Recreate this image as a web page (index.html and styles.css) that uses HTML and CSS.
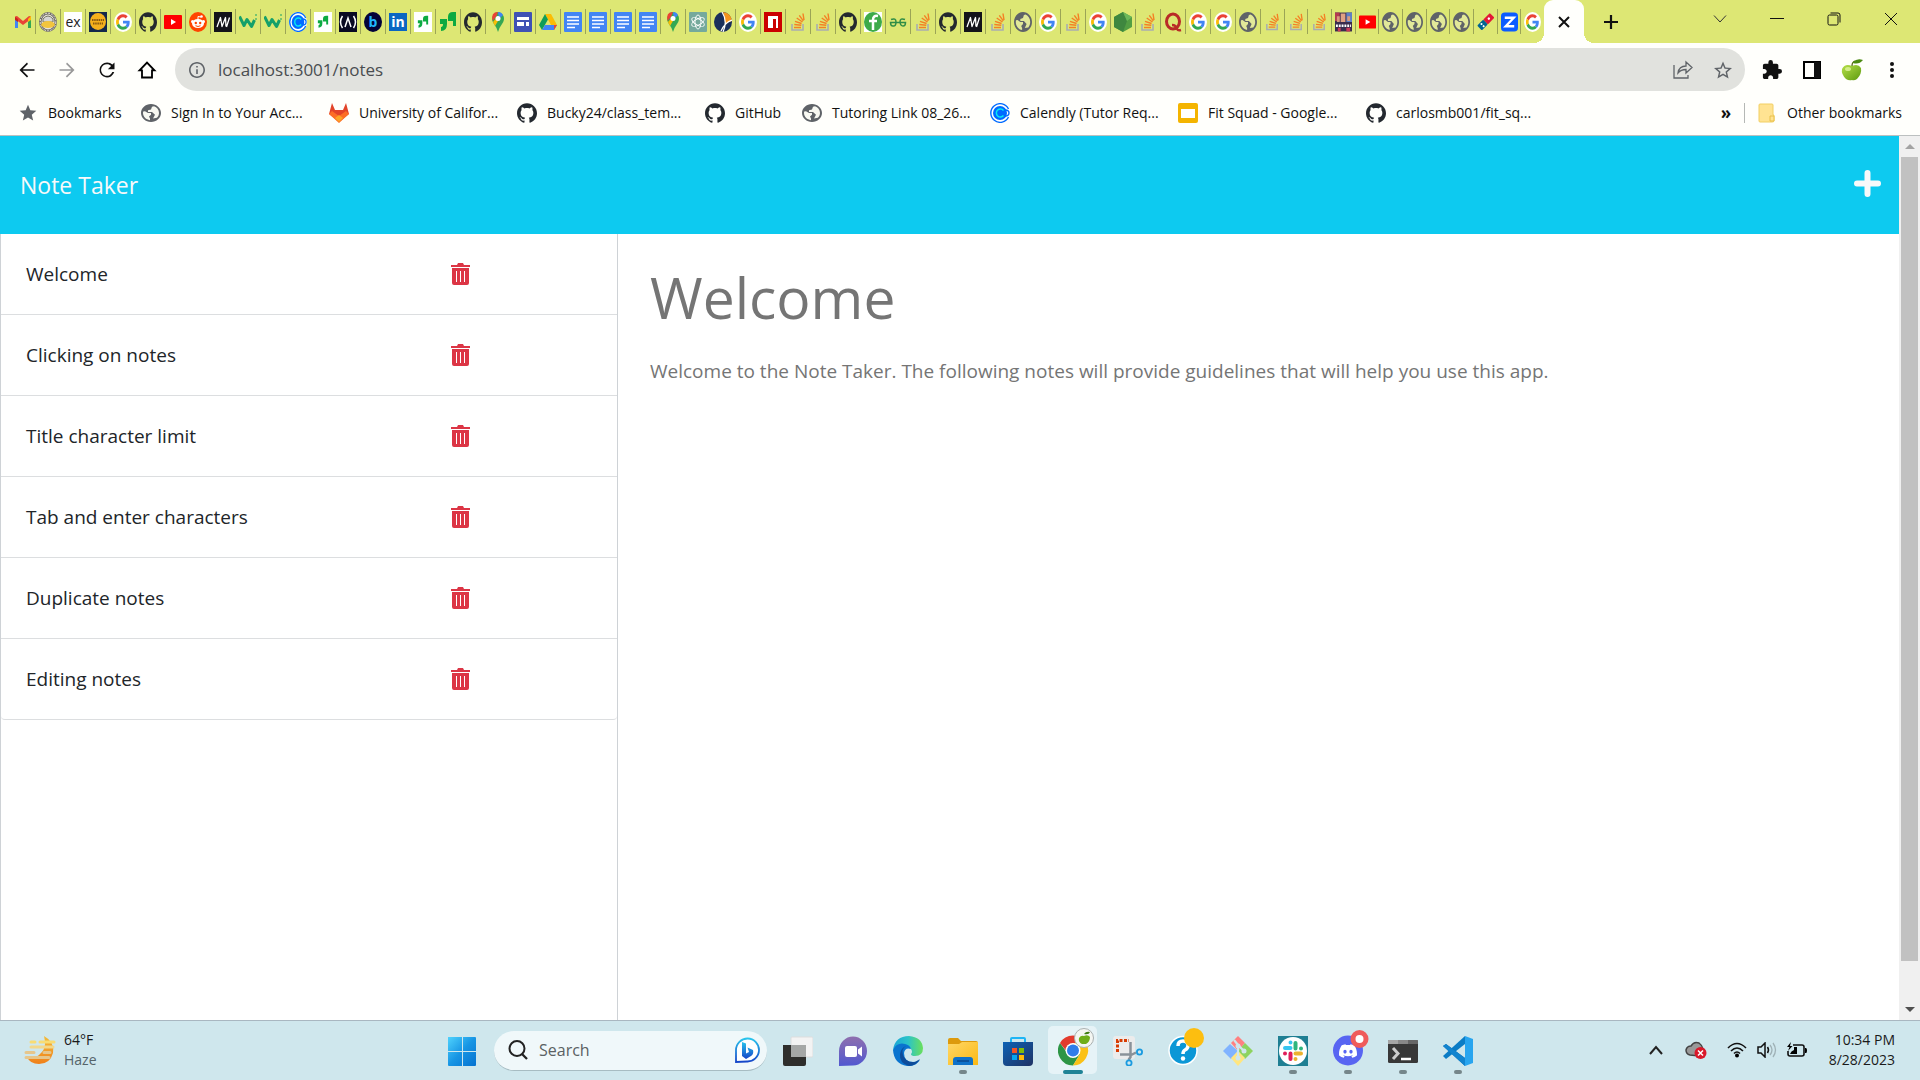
FILE: index.html
```html
<!DOCTYPE html>
<html lang="en">
<head>
<meta charset="utf-8">
<title>Note Taker</title>
<link rel="stylesheet" href="styles.css">
</head>
<body>
<svg class="sprite" aria-hidden="true">
  <symbol id="gmail" viewBox="0 0 18 20"><path d="M1 5h3v11H1z" fill="#4285f4"/><path d="M14 7l3-2v11h-3z" fill="#34a853"/><path d="M1 4.500l2-.5 6 5 6-5 2 .5V7l-8 6-8-6z" fill="#ea4335"/><path d="M1 5l3 2v3L1 8z" fill="#c5221f"/><path d="M14 7l3-3v4l-3 2z" fill="#fbbc04"/></symbol>
  <symbol id="face" viewBox="0 0 18 20"><ellipse cx="9" cy="10" rx="9" ry="10" fill="#6d6a66"/><ellipse cx="9" cy="10" rx="7.800" ry="8.800" fill="none" stroke="#e8e4da" stroke-dasharray="2 1"/><ellipse cx="9" cy="10" rx="6.500" ry="7.500" fill="#e8e4da"/><path d="M4 7q5-6 10 0v3H4z" fill="#d6d6d6" stroke="#776"/><path d="M2 13q1-4 7-4t7 4q-2 3-7 3t-7-3z" fill="#f2c53d"/></symbol>
  <symbol id="orange" viewBox="0 0 18 20"><path d="M0 0h18v20H0z" fill="#14284b"/><ellipse cx="9" cy="9.500" rx="8" ry="8.500" fill="#f5b01c"/><path d="M3 8h12M4 11.500h10" stroke="#8a5a10" stroke-width="2" stroke-dasharray="1.500 .7"/></symbol>
  <symbol id="google" viewBox="-7 -7 62 62" preserveAspectRatio="none"><circle cx="24" cy="24" r="31" fill="#fff"/><path fill="#EA4335" d="M24 9.500c3.540 0 6.710 1.220 9.210 3.600l6.850-6.850C35.900 2.380 30.470 0 24 0 14.620 0 6.510 5.380 2.560 13.220l7.980 6.190C12.430 13.720 17.740 9.500 24 9.500z"/><path fill="#4285F4" d="M46.980 24.550c0-1.570-.15-3.090-.38-4.550H24v9.020h12.940c-.58 2.960-2.260 5.480-4.780 7.180l7.730 6c4.510-4.180 7.090-10.360 7.090-17.650z"/><path fill="#FBBC05" d="M10.530 28.590c-.48-1.450-.76-2.990-.76-4.590s.27-3.140.76-4.590l-7.980-6.190C.92 16.460 0 20.120 0 24c0 3.880.92 7.540 2.560 10.780l7.970-6.190z"/><path fill="#34A853" d="M24 48c6.480 0 11.930-2.130 15.890-5.810l-7.730-6c-2.150 1.450-4.920 2.300-8.160 2.300-6.260 0-11.570-4.220-13.470-9.910l-7.980 6.190C6.510 42.620 14.620 48 24 48z"/></symbol>
  <symbol id="github" viewBox="0 0 24 24" preserveAspectRatio="none"><path fill="#24292f" d="M12 .297c-6.630 0-12 5.373-12 12 0 5.303 3.438 9.800 8.205 11.385.6.113.82-.258.82-.577 0-.285-.01-1.040-.015-2.040-3.338.724-4.042-1.610-4.042-1.610C4.422 18.070 3.633 17.700 3.633 17.700c-1.087-.744.084-.729.084-.729 1.205.084 1.838 1.236 1.838 1.236 1.070 1.835 2.809 1.305 3.495.998.108-.776.417-1.305.76-1.605-2.665-.3-5.466-1.332-5.466-5.930 0-1.310.465-2.380 1.235-3.220-.135-.303-.54-1.523.105-3.176 0 0 1.005-.322 3.300 1.230.96-.267 1.980-.399 3-.405 1.020.006 2.040.138 3 .405 2.280-1.552 3.285-1.230 3.285-1.230.645 1.653.24 2.873.12 3.176.765.84 1.230 1.910 1.230 3.220 0 4.610-2.805 5.625-5.475 5.920.42.36.81 1.096.81 2.220 0 1.606-.015 2.896-.015 3.286 0 .315.21.69.825.57C20.565 22.092 24 17.592 24 12.297c0-6.627-5.373-12-12-12"/></symbol>
  <symbol id="youtube" viewBox="0 0 18 20"><rect y="3" width="18" height="14" rx="1" fill="#f00"/><path d="M7 7l5 3-5 3z" fill="#fff"/></symbol>
  <symbol id="reddit" viewBox="0 0 18 20"><ellipse cx="9" cy="10" rx="9" ry="10" fill="#ff4500"/><ellipse cx="9" cy="11.500" rx="6" ry="4.500" fill="#fff"/><circle cx="3.500" cy="9.500" r="1.500" fill="#fff"/><circle cx="14.500" cy="9.500" r="1.500" fill="#fff"/><circle cx="12.500" cy="4.500" r="1.300" fill="#fff"/><path d="M9 8V4.500l3 .5" stroke="#fff" fill="none"/><circle cx="6.800" cy="11" r="1.200" fill="#ff4500"/><circle cx="11.200" cy="11" r="1.200" fill="#ff4500"/><path d="M6.500 13.700q2.500 1.600 5 0" stroke="#ff4500" fill="none"/></symbol>
  <symbol id="mlogo" viewBox="0 0 18 20"><path d="M0 0h18v20H0z" fill="#13131a"/><path d="M3 15L6.500 5.500 8 14.500 11.500 5.500 12 14.500M12.500 15L15.500 5.500" stroke="#fff" stroke-width="1.300" stroke-linejoin="round" fill="none"/></symbol>
  <symbol id="wlogo" viewBox="0 0 18 20"><path d="M.5 4.500l4.500 9 3-6 4.500 7 3-6.500" stroke="#15a06a" stroke-width="3" stroke-linejoin="round" fill="none"/><path d="M17 2v2M17 6v2" stroke="#15a06a"/></symbol>
  <symbol id="calendly" viewBox="0 0 20 20" preserveAspectRatio="none"><circle cx="10" cy="10" r="10" fill="#fff"/><path d="M18.500 6a9.300 9.300 0 1 0 0 8" fill="none" stroke="#006bff" stroke-width="1.400"/><circle cx="10" cy="10" r="7" fill="#006bff"/><path d="M13.500 7.500a4 4 0 1 0 0 5" fill="none" stroke="#0ae8f0" stroke-width="1.500"/><path d="M15 7q4 0 4 3t-4 3" fill="none" stroke="#006bff" stroke-width="1.400"/></symbol>
  <symbol id="glass" viewBox="0 0 18 20"><path d="M1 7h7v5q0 7-6 7v-4q2 0 2-3H1zM17 14V0h-3q-5 0-5 5v4h5v5z" fill="#0caa41"/></symbol>
  <symbol id="glasswhite" viewBox="-5 -6 28 32" preserveAspectRatio="none"><path d="M-5-6h28v32H-5z" fill="#fff"/><path d="M1 7h7v5q0 7-6 7v-4q2 0 2-3H1zM17 14V0h-3q-5 0-5 5v4h5v5z" fill="#0caa41"/></symbol>
  <symbol id="fcc" viewBox="0 0 18 20"><path d="M0 0h18v20H0z" fill="#0a0a23"/><path d="M3.500 4q-4 6 0 12M14.500 4q4 6 0 12M6 15l3-9 3 9" fill="none" stroke="#fff" stroke-width="1.500"/></symbol>
  <symbol id="maps" viewBox="0 0 18 20"><path d="M9 20q-1-4-4-8-3-4-1-8 2-4 5-4t5.500 4q1.500 4-1.500 8-3 4-4 8z" fill="#34a853"/><path d="M3.500 9q-2-9 5.500-9l-2 5z" fill="#ea4335"/><path d="M9 0q3.500 0 5 3l-4 4z" fill="#4285f4"/><path d="M4 10l5-6v5l-3 5z" fill="#fbbc04"/><circle cx="9" cy="6.500" r="2.500" fill="#fff"/></symbol>
  <symbol id="sites" viewBox="0 0 18 20"><rect width="18" height="20" rx="1" fill="#3f51b5"/><path d="M3 5h12v3H3zM3 10h7v4H3zM12 10h3v4h-3z" fill="#fff"/></symbol>
  <symbol id="drive" viewBox="0 0 18 20"><path d="M6 2h6l6 11h-6z" fill="#fbbc04"/><path d="M6 2l3 5.500L3 18l-3-5z" fill="#0f9d58"/><path d="M3 18l3-5h12l-3 5z" fill="#4285f4"/><path d="M15 13h3l-3 5z" fill="#ea4335"/></symbol>
  <symbol id="docs" viewBox="0 0 18 20"><rect width="18" height="20" rx="1" fill="#4285f4"/><path d="M3 5h12M3 8.500h12M3 12h12M3 15.500h8" stroke="#fff" stroke-width="1.600"/></symbol>
  <symbol id="gpt" viewBox="0 0 18 20"><rect width="18" height="20" rx="1" fill="#75a99c"/><g fill="none" stroke="#fff" stroke-width=".9"><ellipse cx="9" cy="10" rx="3" ry="7"/><ellipse cx="9" cy="10" rx="3" ry="7" transform="rotate(60 9 10)"/><ellipse cx="9" cy="10" rx="3" ry="7" transform="rotate(-60 9 10)"/></g></symbol>
  <symbol id="navy" viewBox="0 0 18 20"><ellipse cx="9" cy="10" rx="9" ry="10" fill="#1b2f5b"/><path d="M9 0q8 1 9 9-5 1-7 4 0-8-2-13z" fill="#f7941d"/><path d="M8 0q6 9 1 20M18 8q-7 2-11 11" stroke="#fff" fill="none" stroke-width="1.200"/></symbol>
  <symbol id="npm" viewBox="0 0 18 20"><path d="M0 0h18v20H0z" fill="#cb0000"/><path d="M4 4h10v12h-2V7h-3v9H4z" fill="#fff"/></symbol>
  <symbol id="so" viewBox="0 0 18 20"><path d="M3 12v6h11v-6" fill="none" stroke="#a9adb1" stroke-width="1.600"/><path d="M5 15.500h7M5.300 12.500l7 .8M6 9.300l6.600 2.200M7.700 6l5.800 4M10.300 3.300l4 5.600M14 1.500l1 6.700" stroke="#f48024" stroke-width="1.400"/></symbol>
  <symbol id="fgreen" viewBox="0 0 18 20"><path d="M0 0h18v20H0z" fill="#fff"/><ellipse cx="9" cy="10" rx="9" ry="10" fill="#3daa49"/><path d="M14 4q-5-1-5 4v10M5 9h8" stroke="#fff" stroke-width="2.500" fill="none"/></symbol>
  <symbol id="gfg" viewBox="0 0 18 20"><path d="M2 7.500q5-2 5 2.500t-3 4q-2.500 0-2.500-3.500h15q0 3.500-2.500 3.500t-3-4q0-4.500 5-2.500" fill="none" stroke="#2f8d46" stroke-width="1.500"/></symbol>
  <symbol id="globe" viewBox="2 2 20 20" preserveAspectRatio="none"><circle cx="12" cy="12" r="9.500" fill="#eceee0" opacity=".35"/><path fill="#5f6368" d="M12 2C6.480 2 2 6.480 2 12s4.480 10 10 10 10-4.480 10-10S17.520 2 12 2zm-1 17.930c-3.950-.49-7-3.850-7-7.930 0-.62.08-1.210.21-1.790L6 10l3 2h3v2l-2 2 1 2zM17.900 17.400L14 18l2-4-3-3H9V9l3-1 1-3 2-.4c2.930 1.190 5 4.060 5 7.410 0 2.080-.8 3.970-2.100 5.390z"/></symbol>
  <symbol id="node" viewBox="0 0 18 20"><path d="M9 0l9 5v10l-9 5-9-5V5z" fill="#539e43"/><path d="M9 0l4 9-4 11-9-5V5z" fill="#3f873f"/><path d="M9 0l9 5-5 4z" fill="#6cb85a"/></symbol>
  <symbol id="quora" viewBox="0 0 18 20"><ellipse cx="9" cy="9.500" rx="6.500" ry="7.500" fill="none" stroke="#b92b27" stroke-width="3"/><path d="M8 13q4 0 5 4 1 2 4 1" stroke="#b92b27" stroke-width="2.500" fill="none"/></symbol>
  <symbol id="poster" viewBox="0 0 18 20"><path d="M0 0h18v20H0z" fill="#3a2b4d"/><path d="M0 0h5v9H0z" fill="#b33a50"/><path d="M6 1h5v9H6z" fill="#e0a184"/><path d="M12 0h6v10h-6z" fill="#5e7fc5"/><path d="M2 4h3v6H2zM13 4h3v5h-3z" fill="#d89a7c"/><path d="M1 14h16" stroke="#fff" stroke-width="2.500" stroke-dasharray="2 1"/><path d="M3 16h3v4H3zM12 16h4v4h-4z" fill="#c8385a"/></symbol>
  <symbol id="domino" viewBox="0 0 18 20"><g transform="rotate(45 9 10)"><rect x="5.500" y="0" width="7" height="10" rx="1" fill="#e31837"/><rect x="5.500" y="10" width="7" height="9" rx="1" fill="#006491"/><circle cx="9" cy="5" r="1.300" fill="#fff"/><circle cx="7.500" cy="14.500" r="1.100" fill="#fff"/><circle cx="10.700" cy="14.500" r="1.100" fill="#fff"/></g></symbol>
  <symbol id="zed" viewBox="0 0 18 20"><rect width="18" height="20" rx="4" fill="#0b5cff"/><path d="M4 5.500h9.500L5 14.500h9" fill="none" stroke="#fff" stroke-width="2.500"/></symbol>
  <symbol id="back" viewBox="0 0 24 24"><path d="M21 11H6.830l6.300-6.300L12 3l-9 9 9 9 1.400-1.400L6.830 13H21z"/></symbol>
  <symbol id="reload" viewBox="0 0 24 24"><path d="M18.500 5.500A9 9 0 0 0 12 3a9 9 0 1 0 8.700 11.500h-2.300A7 7 0 1 1 12 5c2 0 3.600.8 4.900 2.100L13 11h8V3z"/></symbol>
  <symbol id="home" viewBox="0 0 24 24"><path d="M3 12.500L12 3l9 9.500h-3V21H6v-8.500z" fill="none" stroke="#000" stroke-width="2.200"/></symbol>
  <symbol id="info" viewBox="2 2 20 20"><path d="M11 7h2v2h-2zm0 4h2v6h-2zm1-9C6.480 2 2 6.480 2 12s4.480 10 10 10 10-4.480 10-10S17.520 2 12 2zm0 18c-4.410 0-8-3.590-8-8s3.590-8 8-8 8 3.590 8 8-3.590 8-8 8z"/></symbol>
  <symbol id="share" viewBox="0 0 20 20"><path d="M1 5v13h14v-3M5 13q1-7 8-7V2l6 5.500-6 5.500V9.500q-5 0-8 3.500z" fill="none" stroke="#5f6368" stroke-width="1.300"/></symbol>
  <symbol id="star" viewBox="2 2 20 19"><path d="M22 9.240l-7.190-.62L12 2 9.190 8.630 2 9.240l5.460 4.730L5.820 21 12 17.270 18.180 21l-1.630-7.030L22 9.240zM12 15.400l-3.760 2.270 1-4.280-3.320-2.880 4.380-.38L12 6.100l1.710 4.040 4.380.38-3.320 2.880 1 4.280L12 15.400z"/></symbol>
  <symbol id="starfull" viewBox="0 0 24 24"><path fill="#5f6368" d="M12 17.270L18.180 21l-1.640-7.030L22 9.240l-7.190-.61L12 2 9.190 8.630 2 9.240l5.460 4.730L5.820 21z"/></symbol>
  <symbol id="puzzle" viewBox="1 1 22 22"><path d="M20.500 11H19V7c0-1.100-.9-2-2-2h-4V3.500a2.500 2.500 0 0 0-5 0V5H4c-1.100 0-1.990.9-1.990 2v3.800H3.500c1.490 0 2.700 1.210 2.700 2.700s-1.210 2.700-2.700 2.700H2V20c0 1.100.9 2 2 2h3.800v-1.500c0-1.490 1.210-2.700 2.700-2.700 1.490 0 2.700 1.210 2.700 2.700V22H17c1.100 0 2-.9 2-2v-4h1.500a2.500 2.500 0 0 0 0-5z"/></symbol>
  <symbol id="panel" viewBox="0 0 20 20"><path d="M2 2h16v16H2z" fill="none" stroke="#000" stroke-width="2"/><path d="M12 2h6v16h-6z"/></symbol>
  <symbol id="apple" viewBox="0 0 22 22"><path d="M11 7q6-3 9 2 1 6-4 11-3 2-5 1-3 1-6-1-5-5-4-10 3-6 10-3z" fill="url(#applefill)"/><path d="M11 7q0-4 3-5" stroke="#5a6b1a" fill="none" stroke-width="1.300"/><path d="M12 3q4-4 10-2-4 5-10 3z" fill="#4b8a12"/><ellipse cx="7" cy="10" rx="3" ry="2" fill="#e0f59a" opacity=".8"/></symbol>
  <symbol id="dots" viewBox="0 0 20 20"><circle cx="10" cy="4" r="2"/><circle cx="10" cy="10" r="2"/><circle cx="10" cy="16" r="2"/></symbol>
  <symbol id="gitlab" viewBox="0 0 20 20"><path d="M3 0l3 7h8l3-7 3 11-10 8L0 11z" fill="#e24329"/><path d="M0 11l3-3 7 5 7-5 3 3-10 9z" fill="#fc6d26"/><path d="M6 15l4-3 4 3-4 4z" fill="#fca326"/></symbol>
  <symbol id="slides" viewBox="0 0 20 20"><rect width="20" height="20" rx="2" fill="#f4b400"/><path d="M3 6h14v9H3z" fill="#fff"/></symbol>
  <symbol id="folder" viewBox="0 0 20 20"><path d="M2 2q0-1 1-1h12q1 0 1 1v10h1v6q0 1-2 1H3q-1 0-1-1z" fill="#ffe392" stroke="#f2cf63"/><path d="M13 18v-5h4v5z" fill="#ffe392" stroke="#e9c04a"/></symbol>
  <symbol id="trash" viewBox="0 0 19 22"><path d="M0 2h6l1-2h5l1 2h6v2H0z"/><path fill-rule="evenodd" d="M1 5h17v15q0 2-2 2H3q-2 0-2-2zM5 8v11h1V8zM9 8v11h1V8zM13 8v11h1V8z"/></symbol>
  <symbol id="bigplus" viewBox="0 0 27 27"><path d="M13.500 3v21M3 13.500h21" stroke="#f8f9fa" stroke-width="6" stroke-linecap="round"/></symbol>
  <symbol id="plus" viewBox="0 0 16 16"><path d="M8 1v14M1 8h14" stroke="#111" stroke-width="2.200"/></symbol>
  <symbol id="times" viewBox="0 0 12 12"><path d="M1 1l10 10M11 1L1 11" stroke="#111" stroke-width="2"/></symbol>
  <symbol id="chev" viewBox="0 0 14 14"><path d="M1 3.500l6 6.500 6-6.500" fill="none" stroke="#333"/></symbol>
  <symbol id="min" viewBox="0 0 14 14"><path d="M0 6.500h14" stroke="#111"/></symbol>
  <symbol id="max" viewBox="0 0 14 14"><rect x="1" y="3" width="10" height="10" rx="1.500" fill="none" stroke="#111"/><path d="M3.500 1H11q2 0 2 2v7.500" fill="none" stroke="#111"/></symbol>
  <symbol id="close" viewBox="0 0 14 14"><path d="M1 1l12 12M13 1L1 13" stroke="#111"/></symbol>
  <symbol id="haze" viewBox="0 0 32 32"><path d="M20 2q11 6 9 17-3 11-14 11Q6 30 3 23q7 3 12-2 6-5 6-11 0-4-1-8z" fill="url(#hazefill)"/><path d="M7 8h4M16 8h14" stroke="#f8dc74" stroke-width="3" stroke-linecap="round"/><path d="M7 13h22" stroke="#f3d88a" stroke-width="3" stroke-linecap="round"/><path d="M2 18.500h8M20 18.500h6M2 23.500h23" stroke="#e6c68c" stroke-width="3" stroke-linecap="round"/></symbol>
  <symbol id="windows" viewBox="0 0 30 30"><path d="M1 1h14v14H1zM16 1h12q1 0 1 1v13H16zM1 16h14v14H2q-1 0-1-1zM16 16h13v13q0 1-1 1H16z" fill="url(#winfill)"/></symbol>
  <symbol id="lens" viewBox="0 0 20 20"><circle cx="9" cy="8.500" r="7.500" fill="none" stroke="#222" stroke-width="2"/><path d="M14 14l5 5" stroke="#222" stroke-width="2.300"/></symbol>
  <symbol id="bing" viewBox="0 0 26 26"><path d="M2 25V13A11.500 11.500 0 1 1 13 24.500z" fill="#fff" stroke="url(#bingfill)" stroke-width="1.800"/><path d="M8 5l4 1.500v10l3-1.500-1.500-4.500L19 13q1 4-2 6l-5 3-4-3z" fill="url(#bingfill)"/></symbol>
  <symbol id="taskview" viewBox="0 0 30 30"><path d="M8 2q0-1 1-1h20q1 0 1 1v18q0 1-1 1H8z" fill="#f3f3f3" stroke="#ddd"/><path d="M0 9h23v19q0 2-2 2H2q-2 0-2-2z" fill="#2e2e2c"/><path d="M8 9h15v12H8z" fill="#a5a7a6"/></symbol>
  <symbol id="chat" viewBox="0 0 30 30"><path d="M1 30V15A14 14.500 0 1 1 15 29.500z" fill="url(#chatfill)"/><rect x="7" y="10" width="12" height="11" rx="2" fill="#fff"/><path d="M20 13.500l4-3v10l-4-3z" fill="#fff"/></symbol>
  <symbol id="edge" viewBox="0 0 30 30"><path d="M0 14Q2 0 16 0q13 1 14 12 0 8-8 8-4 0-4-2 2-2 0-5-5-8-18 1z" fill="url(#edgefill)"/><path d="M0 14Q4 6 12 8q5 1 6 5-6-2-7 4 0 9 9 9 4 0 7-2-5 7-13 6Q1 28 0 14z" fill="#0a74cf"/><path d="M13 10q-5 3-3 9 3 8 12 7l5-3q-4 7-11 7Q6 27 7 18q1-6 6-8z" fill="#0d4c9a"/></symbol>
  <symbol id="explorer" viewBox="0 0 30 30"><path d="M0 4q0-2 2-2h8l3 3h15q2 0 2 2v5H0z" fill="#dd9a0c"/><path d="M0 8h11l3-2h16v23H0z" fill="url(#folderfill)"/><path d="M5 29v-5q0-3 3-3h14q3 0 3 3v5z" fill="#0f72c9"/><path d="M9 25h12" stroke="#0a4a8f" stroke-width="1.500"/></symbol>
  <symbol id="store" viewBox="0 0 30 30"><path d="M8 8V3q0-1 1-1h12q1 0 1 1v5" fill="none" stroke="#1fb5f5" stroke-width="2"/><path d="M0 6h30v20q0 4-4 4H4q-4 0-4-4z" fill="url(#storefill)"/><path d="M9 12h5v5H9z" fill="#f35325"/><path d="M16 12h5v5h-5z" fill="#81bc06"/><path d="M9 19h5v5H9z" fill="#05a6f0"/><path d="M16 19h5v5h-5z" fill="#ffba08"/></symbol>
  <symbol id="chrome" viewBox="0 0 36 38"><path d="M2 15A15 15 0 0 0 15 37.500L22 26l-12 0z" fill="#2d9545"/><path d="M15 37.500A15 15 0 0 0 28 15H15l7 11z" fill="#fbc116"/><path d="M2 15A15 15 0 0 1 28 15H15l-6 9z" fill="#e33b2e"/><circle cx="15" cy="22.500" r="7.500" fill="#fff"/><circle cx="15" cy="22.500" r="6" fill="#2f7de9"/><circle cx="26" cy="10" r="9.500" fill="#f4f6f2" stroke="#aab0b0"/><path d="M26 8q4-2 6 1 0 5-4 7h-4q-4-2-3-6 2-3 5-2z" fill="#6fae1a"/><path d="M26 6q2-3 6-2-1 3-6 2z" fill="#3f7d10"/></symbol>
  <symbol id="snip" viewBox="0 0 30 30"><rect width="22" height="23" rx="3" fill="#ececec"/><path d="M4.500 16V4.500H16" fill="none" stroke="#d83b01" stroke-width="3" stroke-dasharray="3 1.500"/><path d="M17.500 6v15l-2 3M7 18.500h12l4-2" fill="none" stroke="#8a9299" stroke-width="2.500"/><circle cx="26.500" cy="16" r="2.600" fill="none" stroke="#1b9be0" stroke-width="1.800"/><circle cx="16" cy="27" r="2.600" fill="none" stroke="#1b9be0" stroke-width="1.800"/></symbol>
  <symbol id="help" viewBox="0 0 36 38"><circle cx="15" cy="22.500" r="14" fill="#0b97d6" stroke="#fff" stroke-width="1.500"/><path d="M10 18q0-5 5-5t5 4.500q0 3-3 4.500-2 1-2 4" fill="none" stroke="#fff" stroke-width="3.500"/><circle cx="15" cy="30.500" r="2.200" fill="#fff"/><circle cx="26" cy="10" r="10" fill="#fdbe10"/></symbol>
  <symbol id="git" viewBox="0 0 30 30"><path d="M15 0l7 7-7 8-7-8z" fill="#ff8080"/><path d="M7 8l8 7-7 8-8-8z" fill="#80b3ff"/><path d="M22 7l8 8-8 8-7-8z" fill="#8dd35f"/><path d="M15 15l7 7-7 8-7-8z" fill="#ffe680"/><path d="M11 4l4 5v13M15 9l6 6" stroke="#cfe7ed" stroke-width="2.200" fill="none"/><circle cx="15" cy="22" r="2.500" fill="#cfe7ed"/><circle cx="21" cy="15" r="2.500" fill="#cfe7ed"/><circle cx="15" cy="10" r="2.500" fill="#cfe7ed"/></symbol>
  <symbol id="slack" viewBox="0 0 30 30"><path d="M0 0h30v30H0z" fill="#1f7f93"/><circle cx="15" cy="15" r="14" fill="#fff"/><g stroke-width="4" stroke-linecap="round"><path d="M12.500 6.500v0M7 12h5.500" stroke="#36c5f0"/><path d="M17.500 7v5.500M23 12.500v0" stroke="#2eb67d"/><path d="M17.500 17.500h5.500M17.500 23v0" stroke="#ecb22e"/><path d="M12.500 17.500v5.500M7 17.500v0" stroke="#e01e5a"/></g></symbol>
  <symbol id="discord" viewBox="0 0 36 38"><circle cx="15" cy="22.500" r="15" fill="#5865f2"/><svg x="6" y="14" width="18" height="18" viewBox="0 0 24 24"><path fill="#fff" d="M20.317 4.370a19.800 19.800 0 00-4.885-1.515.074.074 0 00-.079.037c-.211.375-.445.865-.608 1.250-1.845-.276-3.680-.276-5.487 0-.164-.393-.406-.874-.618-1.250a.077.077 0 00-.079-.037 19.740 19.740 0 00-4.885 1.515.07.07 0 00-.032.028C.533 9.046-.319 13.580.099 18.058a.082.082 0 00.031.056c2.053 1.508 4.041 2.423 5.993 3.030a.078.078 0 00.084-.028c.462-.63.873-1.295 1.226-1.994a.076.076 0 00-.042-.106c-.653-.248-1.274-.55-1.872-.892a.077.077 0 01-.008-.128c.126-.094.252-.192.372-.291a.074.074 0 01.078-.01c3.928 1.793 8.180 1.793 12.061 0a.074.074 0 01.079.01c.12.099.246.198.373.292a.077.077 0 01-.007.128 12.300 12.300 0 01-1.873.891.077.077 0 00-.041.107c.36.698.772 1.363 1.225 1.993a.076.076 0 00.084.029c1.961-.607 3.950-1.522 6.002-3.030a.077.077 0 00.031-.055c.5-5.177-.838-9.674-3.548-13.660a.061.061 0 00-.031-.029zM8.020 15.331c-1.183 0-2.157-1.086-2.157-2.419s.956-2.419 2.157-2.419c1.211 0 2.176 1.095 2.157 2.419 0 1.333-.956 2.419-2.157 2.419zm7.975 0c-1.183 0-2.157-1.086-2.157-2.419s.955-2.419 2.157-2.419c1.211 0 2.176 1.095 2.157 2.419 0 1.333-.946 2.419-2.157 2.419z"/></svg><circle cx="26.500" cy="11" r="6.500" fill="#fff" stroke="#ef5b5b" stroke-width="5"/></symbol>
  <symbol id="terminal" viewBox="0 0 30 30"><rect y="4" width="30" height="23" rx="1.500" fill="#383838"/><path d="M0 8V5q0-1 1-1h9v4z" fill="#a5a5a5"/><path d="M10 4h10v4H10z" fill="#888"/><path d="M20 4h9q1 0 1 1v3H20z" fill="#666"/><path d="M5 12l5 5.500L5 23" fill="none" stroke="#ccc" stroke-width="3"/><path d="M13 23h10" stroke="#fff" stroke-width="2.500"/></symbol>
  <symbol id="vscode" viewBox="0 0 30 30"><path d="M22 0v8L3 23l-3-3z" fill="#0b7cc5"/><path d="M22 30v-8L3 8l-3 2z" fill="#0a68b0"/><path d="M0 10l3-2 19 14v8z" fill="#1284cf"/><path d="M22 0l8 3v24l-8 3z" fill="#28a5ef"/></symbol>
  <symbol id="up" viewBox="0 0 14 10"><path d="M1 9l6-7 6 7" fill="none" stroke="#222" stroke-width="2"/></symbol>
  <symbol id="cloud" viewBox="0 0 22 20"><path d="M5 15q-4-1-4-5 1-4 5-4 3-5 8-3 3 2 4 6l-4 7z" fill="#999" stroke="#444" stroke-width="1.500"/><circle cx="15.500" cy="13" r="6" fill="#d9182a"/><path d="M13 10.500l5 5M18 10.500l-5 5" stroke="#fff" stroke-width="1.500"/></symbol>
  <symbol id="wifi" viewBox="0 0 20 16"><path d="M1 6q9-9 18 0M4 9q6-6 12 0M7 11.500q3-3 6 0" fill="none" stroke="#111" stroke-width="1.600"/><circle cx="10" cy="13.500" r="2"/></symbol>
  <symbol id="sound" viewBox="0 0 20 16"><path d="M1 5h3l4-4v14l-4-4H1z" fill="none" stroke="#111" stroke-width="1.500"/><path d="M10.500 5q2 3 0 6" fill="none" stroke="#111" stroke-width="1.500"/><path d="M13 3q4 5 0 10M16 1q5 7 0 14" fill="none" stroke="#9fb1b6" stroke-width="1.300"/></symbol>
  <symbol id="battery" viewBox="0 0 20 16"><path d="M6 3h9q2 0 2 2v7q0 2-2 2H3q-2 0-2-2V9" fill="none" stroke="#111" stroke-width="1.600"/><path d="M18 6h1q1 0 1 2.500T19 11h-1z"/><path d="M7 5h3v7H3q1-3 4-4z"/><path d="M4 0L0 5h2.500L1 9l4.500-5H3z"/></symbol>
  <linearGradient id="applefill" x1="0" y1="0" x2="1" y2="1"><stop offset="0" stop-color="#b6e04a"/><stop offset="1" stop-color="#5d9a0e"/></linearGradient>
  <linearGradient id="hazefill" x1="0" y1="0" x2="0" y2="1"><stop offset="0" stop-color="#f2bd3c"/><stop offset="1" stop-color="#f0801a"/></linearGradient>
  <linearGradient id="winfill" x1="0" y1="0" x2="1" y2="1"><stop offset="0" stop-color="#4fd2fd"/><stop offset=".5" stop-color="#1795e4"/><stop offset="1" stop-color="#0572d0"/></linearGradient>
  <linearGradient id="bingfill" x1="0" y1="0" x2="0" y2="1"><stop offset="0" stop-color="#2ac4ec"/><stop offset="1" stop-color="#1545c8"/></linearGradient>
  <linearGradient id="chatfill" x1="0" y1="0" x2="0" y2="1"><stop offset="0" stop-color="#8f6fae"/><stop offset="1" stop-color="#5158d0"/></linearGradient>
  <linearGradient id="edgefill" x1="0" y1="0" x2="1" y2="0"><stop offset="0" stop-color="#1aa5d8"/><stop offset=".5" stop-color="#2bc3c8"/><stop offset="1" stop-color="#6be05a"/></linearGradient>
  <linearGradient id="folderfill" x1="0" y1="0" x2="1" y2="1"><stop offset="0" stop-color="#ffd767"/><stop offset="1" stop-color="#fbb913"/></linearGradient>
  <linearGradient id="storefill" x1="0" y1="0" x2="1" y2="1"><stop offset="0" stop-color="#0d62b5"/><stop offset="1" stop-color="#1f3264"/></linearGradient>
</svg>

<header class="browser">
  <div class="tabstrip">
    <div class="tabs" id="tabs"></div>
    <div class="tabs tabs-narrow" id="tabs-narrow"></div>
    <div class="tab-active"><button class="plain" aria-label="Close tab"><svg class="i12"><use href="#times"/></svg></button></div>
    <button class="plain new-tab" aria-label="New tab"><svg class="i16"><use href="#plus"/></svg></button>
    <div class="window-buttons">
      <button class="plain" aria-label="Search tabs"><svg class="i14"><use href="#chev"/></svg></button>
      <button class="plain" aria-label="Minimize"><svg class="i14"><use href="#min"/></svg></button>
      <button class="plain" aria-label="Restore"><svg class="i14"><use href="#max"/></svg></button>
      <button class="plain" aria-label="Close window"><svg class="i14"><use href="#close"/></svg></button>
    </div>
  </div>
  <div class="toolbar">
    <button class="plain tool" aria-label="Back"><svg class="i20"><use href="#back"/></svg></button>
    <button class="plain tool dim" aria-label="Forward"><svg class="i20 flip"><use href="#back"/></svg></button>
    <button class="plain tool" aria-label="Reload"><svg class="i20"><use href="#reload"/></svg></button>
    <button class="plain tool" aria-label="Home"><svg class="i20"><use href="#home"/></svg></button>
    <div class="omnibox">
      <svg class="i16"><use href="#info"/></svg>
      <input class="address" type="text" aria-label="Address" value="localhost:3001/notes">
      <button class="plain tool grey" aria-label="Share"><svg class="i20"><use href="#share"/></svg></button>
      <button class="plain tool grey" aria-label="Bookmark this page"><svg class="i18"><use href="#star"/></svg></button>
    </div>
    <div class="tools-right">
      <button class="plain tool" aria-label="Extensions"><svg class="i20"><use href="#puzzle"/></svg></button>
      <button class="plain tool" aria-label="Side panel"><svg class="i20"><use href="#panel"/></svg></button>
      <button class="plain tool" aria-label="Profile"><svg class="i22"><use href="#apple"/></svg></button>
      <button class="plain tool" aria-label="Menu"><svg class="i20"><use href="#dots"/></svg></button>
    </div>
  </div>
  <nav class="bookmarks">
    <a class="first" href="#"><svg class="i20"><use href="#starfull"/></svg>Bookmarks</a>
    <a class="long" href="#"><svg class="i18"><use href="#globe"/></svg>Sign In to Your Acc...</a>
    <a class="long" href="#"><svg class="i20"><use href="#gitlab"/></svg>University of Califor...</a>
    <a class="long" href="#"><svg class="i20"><use href="#github"/></svg>Bucky24/class_tem...</a>
    <a class="short" href="#"><svg class="i20"><use href="#github"/></svg>GitHub</a>
    <a class="long" href="#"><svg class="i18"><use href="#globe"/></svg>Tutoring Link 08_26...</a>
    <a class="long" href="#"><svg class="i20"><use href="#calendly"/></svg>Calendly (Tutor Req...</a>
    <a class="long" href="#"><svg class="i20"><use href="#slides"/></svg>Fit Squad - Google...</a>
    <a class="long" href="#"><svg class="i20"><use href="#github"/></svg>carlosmb001/fit_sq...</a>
    <button class="plain overflow" aria-label="More bookmarks">»</button>
    <a class="other" href="#"><svg class="i20"><use href="#folder"/></svg>Other bookmarks</a>
  </nav>
</header>

<div class="viewport">
  <div class="page">
    <header class="app-bar">
      <a class="brand" href="#">Note Taker</a>
      <button class="plain add-note" aria-label="New note"><svg class="i27"><use href="#bigplus"/></svg></button>
    </header>
    <main class="app">
      <ul class="notes">
        <li><span>Welcome</span><button class="plain trash" aria-label="Delete Welcome"><svg><use href="#trash"/></svg></button></li>
        <li><span>Clicking on notes</span><button class="plain trash" aria-label="Delete Clicking on notes"><svg><use href="#trash"/></svg></button></li>
        <li><span>Title character limit</span><button class="plain trash" aria-label="Delete Title character limit"><svg><use href="#trash"/></svg></button></li>
        <li><span>Tab and enter characters</span><button class="plain trash" aria-label="Delete Tab and enter characters"><svg><use href="#trash"/></svg></button></li>
        <li><span>Duplicate notes</span><button class="plain trash" aria-label="Delete Duplicate notes"><svg><use href="#trash"/></svg></button></li>
        <li><span>Editing notes</span><button class="plain trash" aria-label="Delete Editing notes"><svg><use href="#trash"/></svg></button></li>
      </ul>
      <article class="note">
        <h1>Welcome</h1>
        <p>Welcome to the Note Taker. The following notes will provide guidelines that will help you use this app.</p>
      </article>
    </main>
  </div>
  <div class="scrollbar" aria-hidden="true"><span class="arrow-up"></span><span class="track"><span class="thumb"></span></span><span class="arrow-down"></span></div>
</div>

<footer class="taskbar">
  <div class="weather"><svg class="i32"><use href="#haze"/></svg><div><div class="temp">64°F</div><div class="sky">Haze</div></div></div>
  <div class="dock">
    <button class="plain app-icon" aria-label="Start"><svg class="i30"><use href="#windows"/></svg></button>
    <label class="search"><svg class="i20"><use href="#lens"/></svg><input type="text" placeholder="Search" aria-label="Search"><svg class="i26"><use href="#bing"/></svg></label>
    <button class="plain app-icon" aria-label="Task view"><svg class="i30"><use href="#taskview"/></svg></button>
    <button class="plain app-icon" aria-label="Chat"><svg class="i30"><use href="#chat"/></svg></button>
    <button class="plain app-icon" aria-label="Edge"><svg class="i30"><use href="#edge"/></svg></button>
    <button class="plain app-icon open" aria-label="File Explorer"><svg class="i30"><use href="#explorer"/></svg></button>
    <button class="plain app-icon" aria-label="Store"><svg class="i30"><use href="#store"/></svg></button>
    <button class="plain app-icon open current" aria-label="Chrome"><svg class="badged"><use href="#chrome"/></svg></button>
    <button class="plain app-icon" aria-label="Snipping Tool"><svg class="i30"><use href="#snip"/></svg></button>
    <button class="plain app-icon" aria-label="Get Help"><svg class="badged"><use href="#help"/></svg></button>
    <button class="plain app-icon" aria-label="Git"><svg class="i30"><use href="#git"/></svg></button>
    <button class="plain app-icon open" aria-label="Slack"><svg class="i30"><use href="#slack"/></svg></button>
    <button class="plain app-icon open" aria-label="Discord"><svg class="badged"><use href="#discord"/></svg></button>
    <button class="plain app-icon open" aria-label="Terminal"><svg class="i30"><use href="#terminal"/></svg></button>
    <button class="plain app-icon open" aria-label="Visual Studio Code"><svg class="i30"><use href="#vscode"/></svg></button>
  </div>
  <div class="tray">
    <button class="plain tray-up" aria-label="Hidden icons"><svg class="up"><use href="#up"/></svg></button>
    <svg class="i22"><use href="#cloud"/></svg>
    <div class="status"><svg><use href="#wifi"/></svg><svg><use href="#sound"/></svg><svg><use href="#battery"/></svg></div>
    <div class="clock"><div>10:34 PM</div><div>8/28/2023</div></div>
  </div>
</footer>
<script src="tabs.js"></script>
</body>
</html>
```
FILE: styles.css
```css
* { box-sizing: border-box; }
body {
  margin: 0;
  min-height: 100vh;
  display: flex;
  flex-direction: column;
  background: #fff;
  color: #212529;
  font-family: "Open Sans", "Noto Sans", sans-serif;
  font-size: 19px;
}
a { color: inherit; text-decoration: none; }
svg { display: block; flex: none; }
.sprite { position: absolute; width: 0; height: 0; }
.plain { border: 0; padding: 0; background: none; font: inherit; color: inherit; fill: currentColor; display: flex; align-items: center; justify-content: center; }
.i12 { width: 12px; height: 12px; }
.i14 { width: 14px; height: 14px; }
.i16 { width: 16px; height: 16px; }
.i18 { width: 18px; height: 18px; }
.i20 { width: 20px; height: 20px; }
.i22 { width: 22px; height: 22px; }
.i26 { width: 26px; height: 26px; }
.i27 { width: 27px; height: 27px; }
.i30 { width: 30px; height: 30px; }
.i32 { width: 32px; height: 32px; }

/* Browser frame */
.browser { background: #fffffc; border-bottom: 1px solid #bcc0c0; color: #111; }
.tabstrip { display: flex; height: 43px; padding-left: 11px; background: #dde774; }
.tabs { display: flex; align-items: center; }
.tabs-narrow { width: 283px; }
.tab.plain { width: 25px; height: 25px; padding-left: 3px; border-right: 1px solid #9ba456; justify-content: flex-start; }
.tab svg { width: 18px; height: 20px; }
.tabs-narrow .tab { flex: 1; width: auto; min-width: 0; }
.tabs-narrow .tab:last-child { border: 0; }
.tabs-narrow .tab svg { width: 17px; }
.letters { width: 18px; height: 20px; font-size: 14px; line-height: 19px; text-align: center; }
.ex { background: #fff; color: #222; }
.in { height: 18px; background: #0a66c2; color: #fff; font-weight: 700; line-height: 17px; }
.b { background: #03033a; border-radius: 50%; color: #1fb6ff; font-weight: 700; }
.tab-active { position: relative; width: 40px; background: #fffffc; border-radius: 9px 9px 0 0; display: flex; align-items: center; justify-content: center; }
.tab-active::before, .tab-active::after { content: ""; position: absolute; bottom: 0; width: 10px; height: 10px; }
.tab-active::before { right: 100%; background: radial-gradient(circle at 0 0, transparent 10px, #fffffc 10px); }
.tab-active::after { left: 100%; background: radial-gradient(circle at 100% 0, transparent 10px, #fffffc 10px); }
.new-tab { width: 54px; }
.window-buttons { display: flex; height: 38px; margin-left: auto; padding-right: 1px; }
.window-buttons button { width: 57px; }

.toolbar { display: flex; align-items: center; height: 48px; padding: 5px 8px 0 7px; }
.tool { width: 40px; height: 43px; }
.dim { color: #999; }
.grey { color: #5f6368; }
.flip { transform: scaleX(-1); }
.omnibox { flex: 1; display: flex; align-items: center; height: 43px; margin-left: 8px; padding: 0 2px 0 14px; border-radius: 22px; background: #e1e2de; fill: #5f6368; }
.address { flex: 1; min-width: 0; border: 0; outline: 0; padding: 0; margin-left: 13px; background: none; font: 17px "Open Sans", sans-serif; color: #4a4d50; }
.tools-right { display: flex; margin-left: 7px; }

.bookmarks { display: flex; align-items: center; height: 44px; padding: 0 18px; font-size: 14px; line-height: 20px; white-space: nowrap; }
.bookmarks a { display: flex; align-items: center; gap: 10px; }
.bookmarks svg { width: 20px; }
.first { width: 123px; }
.long { width: 188px; }
.short { width: 97px; }
.overflow.plain { margin: 0 4px 0 auto; width: 28px; font-size: 17px; font-weight: 700; }
.bookmarks .other { border-left: 1px solid #b5b8b5; padding-left: 12px; }

/* Page */
.viewport { flex: 1; display: flex; }
.page { flex: 1; display: flex; flex-direction: column; }
.app-bar { display: flex; justify-content: space-between; align-items: center; height: 98px; padding: 0 18px 0 20px; background: #0dcaf0; color: #f8f9fa; font-size: 23px; }
.add-note { margin-bottom: 4px; }
.app { flex: 1; display: grid; grid-template-columns: 618fr 1281fr; }
.notes { list-style: none; margin: 0; padding: 0; border: 1px solid #ced2d6; border-width: 0 1px; }
.notes li { display: grid; grid-template-columns: 73fr 27fr; align-items: center; height: 81px; border-bottom: 1px solid #dcdee0; }
.notes li:last-child { border-radius: 0 0 4px 4px; }
.notes span { padding-left: 25px; }
.trash { justify-self: start; color: #dc3545; }
.trash svg { width: 19px; height: 22px; }
.note { padding: 23px 32px; color: #757575; }
.note h1 { margin: 0; font-size: 57px; font-weight: 400; line-height: 80px; }
.note p { margin: 20px 0 0; line-height: 28px; }

.scrollbar { width: 21px; display: flex; flex-direction: column; align-items: center; background: #f0f0f0; }
.arrow-up, .arrow-down { height: 21px; display: flex; align-items: center; }
.arrow-up::after, .arrow-down::after { content: ""; border: 5px solid transparent; border-top-width: 0; border-bottom: 5px solid #a3a3a3; }
.arrow-down::after { border-width: 5px 5px 0; border-color: #505050 transparent transparent; }
.track { flex: 1; display: flex; width: 17px; padding-bottom: 38px; }
.thumb { flex: 1; background: #c1c1c1; }

/* Taskbar */
.taskbar { display: grid; grid-template-columns: 1fr auto 1fr; height: 60px; background: #cfe7ed; border-top: 1px solid #a9b7c1; font-size: 14px; line-height: 20px; color: #1a1a1a; }
.weather { display: flex; align-items: center; gap: 8px; padding: 0 0 2px 24px; }
.sky { color: #55646a; }
.dock { display: flex; align-items: center; padding-right: 1px; }
.app-icon { position: relative; width: 55px; height: 59px; }
.badged { width: 36px; height: 38px; margin: -8px 0 0 6px; }
.open::after { content: ""; position: absolute; bottom: 6px; width: 8px; height: 4px; border-radius: 2px; background: #75868a; }
.current::before { content: ""; position: absolute; inset: 5px 3px 6px; border-radius: 5px; background: #e6f3f7; }
.current svg { position: relative; }
.current::after { width: 20px; background: #1f8396; }
.search { display: flex; align-items: center; width: 273px; height: 40px; margin: 0 3px 0 5px; padding: 0 7px 0 14px; border-radius: 20px; background: #f0f8fa; border-bottom: 1px solid #a7bcc2; }
.search input { flex: 1; min-width: 0; border: 0; outline: 0; background: none; padding: 0; margin-left: 11px; font: 16px "Open Sans", sans-serif; }
.search input::placeholder { color: #5a6163; opacity: 1; }
.tray { display: flex; align-items: center; justify-content: flex-end; padding: 0 25px 2px 0; }
.tray-up { margin-right: 22px; }
.up { width: 14px; height: 10px; }
.status { display: flex; gap: 10px; margin: 0 22px 0 20px; }
.status svg { width: 20px; height: 16px; }
.clock { text-align: right; }
```
FILE: tabs.js
```js
// Builds the row of tabs from their icon names.
const wide = 'gmail face ex orange google github youtube reddit mlogo wlogo wlogo calendly glasswhite fcc b in glasswhite glass github maps sites drive docs docs docs docs maps gpt navy google npm so so github fgreen gfg so github mlogo so globe google so google node so quora google google globe';
const narrow = 'so so so poster youtube globe globe globe globe domino zed google';
const letters = ['ex', 'b', 'in'];

function icon(name) {
  return letters.includes(name)
    ? `<span class="letters ${name}">${name}</span>`
    : `<svg><use href="#${name}"/></svg>`;
}
function fill(id, names) {
  document.getElementById(id).innerHTML = names.split(' ').map(name =>
    `<button class="plain tab" aria-label="${name} tab">${icon(name)}</button>`).join('');
}
fill('tabs', wide);
fill('tabs-narrow', narrow);
```
